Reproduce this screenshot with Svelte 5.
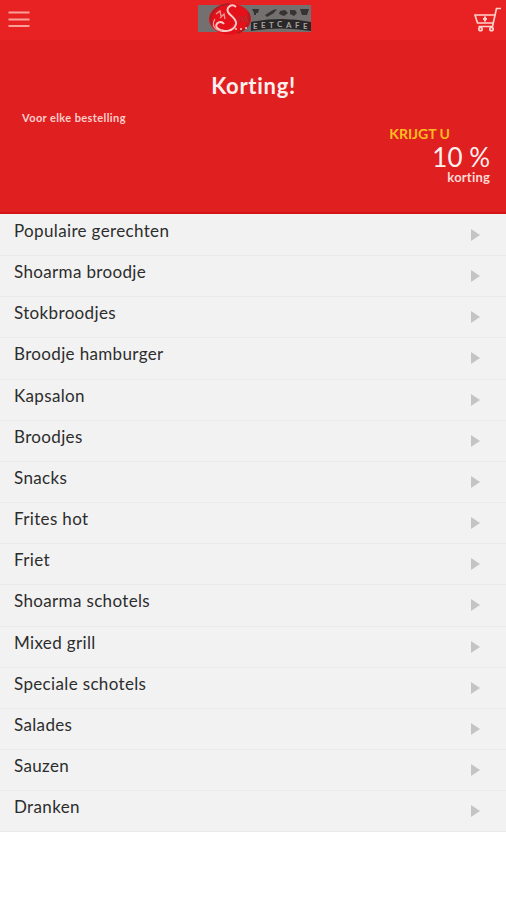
<script>
  const categories = [
    'Populaire gerechten',
    'Shoarma broodje',
    'Stokbroodjes',
    'Broodje hamburger',
    'Kapsalon',
    'Broodjes',
    'Snacks',
    'Frites hot',
    'Friet',
    'Shoarma schotels',
    'Mixed grill',
    'Speciale schotels',
    'Salades',
    'Sauzen',
    'Dranken'
  ];
</script>

<div class="app">
  <header class="top-bar">
    <button class="icon-button" aria-label="Menu">
      <svg width="22" height="20" viewBox="0 0 22 20">
        <path d="M0.5 3.5H21.5M0.5 10.5H21.5M0.5 17H21.5" stroke="#f9a09c" stroke-width="2" />
      </svg>
    </button>

    <svg class="logo" width="114" height="32" viewBox="0 0 114 32">
      <rect x="0" y="2" width="113" height="27" fill="#74706f" />
      <!-- kitchen icons above the name -->
      <g fill="#363333">
        <path d="M54 6h7l-1 4h-2v2h-2v-2z" />
        <path d="M67 12l8-5 4-1-3 4-7 4z" />
        <path d="M82 8l5-1 3 3-4 3-5-2zM92 7h5l2 3-3 3-4-2z" />
        <path d="M102 6h9l-2 6h-5z" />
      </g>
      <path d="M53 19Q84 13 113 19V28Q84 23 53 28Z" fill="#292727" />
      <g class="logo-letters">
        <text x="55" y="26">E</text>
        <text x="63" y="25">E</text>
        <text x="71" y="25">T</text>
        <text x="79" y="24">C</text>
        <text x="88" y="25">A</text>
        <text x="97" y="25">F</text>
        <text x="105" y="26">E</text>
      </g>
      <ellipse cx="32" cy="16" rx="21" ry="15.5" fill="#e4101a" />
      <path d="M14 22C9 11 20 1 31 1M50 9C54 19 48 27 40 30" stroke="#9b2428" stroke-width="1.5" fill="none" />
      <path d="M38 4C34 0 28 4 30 9C32 13 39 15 38 21C36 29 24 30 19 25C16 20 23 17 26 21" stroke="#f7cbc7" stroke-width="2" fill="none" />
      <path d="M17 16C13 22 17 28 24 28M18 11l4-3 1 5M22 15l4-4 1 5" stroke="#e79b98" stroke-width="1.3" fill="none" />
      <text class="logo-small" x="40" y="20">PA</text>
      <g fill="#f7cbc7">
        <circle cx="38" cy="26" r="1" />
        <circle cx="43" cy="26" r="1" />
        <circle cx="48" cy="25" r="1" />
      </g>
    </svg>

    <button class="icon-button" aria-label="Winkelwagen">
      <svg width="28" height="26" viewBox="0 0 28 26" fill="none" stroke="#ffd2cd" stroke-width="1.7">
        <path d="M27 1.5H22.5L18.5 19.5H4.5" />
        <path d="M20.5 8H1L3.5 16H19" />
        <path d="M11 9.5V14.5M9 12H13" stroke-width="2" />
        <circle cx="6.5" cy="22" r="1.7" />
        <circle cx="17.5" cy="22" r="1.7" />
      </svg>
    </button>
  </header>

  <section class="promo">
    <h1>Korting!</h1>
    <p class="condition">Voor elke bestelling</p>
    <div class="offer">
      <span class="offer-title">KRIJGT U</span>
      <span class="offer-value">10 %</span>
      <span class="offer-unit">korting</span>
    </div>
  </section>

  <ul class="categories">
    {#each categories as category}
      <li>
        <span>{category}</span>
        <svg width="9" height="12" viewBox="0 0 9 12">
          <path d="M0 0L9 6L0 12Z" fill="#c4c4c4" />
        </svg>
      </li>
    {/each}
  </ul>
</div>

<style>
  :global(body) {
    background: #fff;
  }

  .app {
    min-height: 900px;
    font-family: Lato, 'Open Sans', sans-serif;
    color: #2d2d2d;
  }

  .top-bar {
    display: flex;
    justify-content: space-between;
    align-items: flex-start;
    box-sizing: border-box;
    height: 40px;
    padding: 3px 4px 0 8px;
    background: #e82122;
  }

  .icon-button {
    display: flex;
    padding: 0;
    border: 0;
    background: none;
  }

  .icon-button:first-child {
    width: 30px;
    padding-top: 6px;
  }

  .icon-button:last-child {
    padding-top: 4px;
  }

  .logo {
    margin-right: 2px;
  }

  .logo-letters {
    font-size: 8px;
    font-weight: 700;
    fill: #aaa5a4;
  }

  .logo-small {
    font-size: 9px;
    fill: #a93334;
  }

  .promo {
    display: flex;
    flex-direction: column;
    box-sizing: border-box;
    height: 174px;
    padding: 32px 16px 0 22px;
    background: #e01f21;
    border-bottom: 2px solid #d31416;
    color: #fff0ef;
  }

  h1 {
    margin: 0 0 0 -5px;
    font-size: 22px;
    line-height: 28px;
    font-weight: 700;
    letter-spacing: 0.7px;
    text-align: center;
  }

  .condition {
    margin: 10px 0 0;
    font-size: 11px;
    line-height: 16px;
    font-weight: 700;
    letter-spacing: 0.4px;
    color: #ffcfcc;
  }

  .offer {
    display: flex;
    flex-direction: column;
    align-items: flex-end;
  }

  .offer-title {
    margin-right: 40px;
    font-size: 14px;
    line-height: 16px;
    font-weight: 700;
    color: #ffbd20;
  }

  .offer-value {
    font-size: 26px;
    line-height: 31px;
  }

  .offer-unit {
    margin-top: -2px;
    font-size: 13px;
    line-height: 12px;
    letter-spacing: 0.2px;
    font-weight: 700;
    color: #ffd9d6;
  }

  .categories {
    margin: 0;
    padding: 1px 0 0;
    list-style: none;
    background: #f2f2f2;
  }

  li {
    display: flex;
    justify-content: space-between;
    align-items: flex-start;
    box-sizing: border-box;
    height: 41.17px;
    padding: 5px 26px 0 14px;
    border-bottom: 1px solid #eaeaea;
    font-size: 17px;
    line-height: 22px;
    letter-spacing: 0.35px;
  }

  li svg {
    margin-top: 9px;
  }
</style>
